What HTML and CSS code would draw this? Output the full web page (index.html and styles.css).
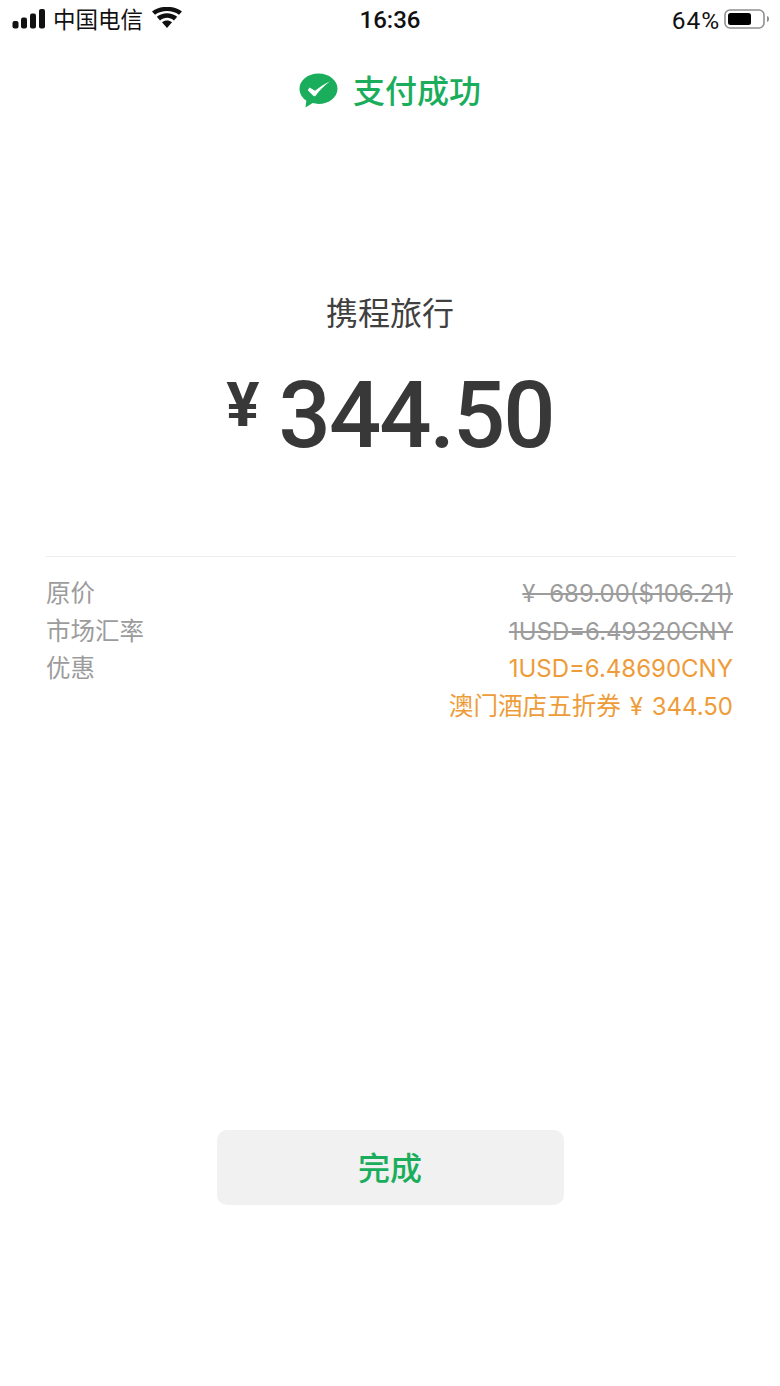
FILE: index.html
```html
<!DOCTYPE html>
<html lang="zh-CN">
<head>
<meta charset="utf-8">
<title>支付成功</title>
<link rel="stylesheet" href="styles.css">
</head>
<body>
<div class="page">
  <div class="status">
    <div class="status-left">
      <svg class="signal" width="34" height="20" viewBox="0 0 34 20"><rect x="0.5" y="12" width="6" height="7.5" rx="2"/><rect x="9" y="8.5" width="6" height="11" rx="2"/><rect x="18" y="4.5" width="6" height="15" rx="2"/><rect x="27" y="0" width="6" height="19.5" rx="2"/></svg>
      <span class="carrier">中国电信</span>
      <svg class="wifi" width="30" height="22" viewBox="0 0 30 22"><path d="M15 21 10 15.300C13 13 17 13 20 15.300Z"/><path d="M8 13.400 4.800 9.800C10.600 4.900 19.400 4.900 25.200 9.800L22 13.400C17.800 10 12.200 10 8 13.400Z"/><path d="M3 7.800 0 4.500C8.500-1.800 21.500-1.800 30 4.500L27 7.800C20.200 2.800 9.800 2.800 3 7.800Z"/></svg>
    </div>
    <div class="status-time">16:36</div>
    <div class="status-right">
      <span class="percent">64%</span>
      <svg class="battery" width="46" height="22" viewBox="0 0 46 22"><rect x="1" y="2" width="39" height="18" rx="5" fill="none" stroke="#8f8f8f" stroke-width="1.6"/><rect x="4" y="5" width="23" height="12" rx="2.500" fill="#000"/><path d="M43 8c1.600.4 2 1.600 2 3s-.4 2.600-2 3z" fill="#8f8f8f"/></svg>
    </div>
  </div>

  <div class="result">
    <svg class="logo" width="39" height="36" viewBox="0 0 39 36"><path d="M19.500 0.500C30 0.500 38.500 7.200 38.500 15.700S30 30.900 19.500 30.900c-2 0-4-.3-5.800-.8L6.500 34.500l.8-7C3 24.700.5 20.500.5 15.700.5 7.200 9 .5 19.500.5Z" fill="#1aae5c"/><path d="M8.800 17.200 10.500 14.500 16 17.700C20.500 14.200 25 11 30.800 8.500 25 12.500 20.500 17.500 16.800 22.500 15.800 23.700 14.800 23.500 14 22.600Z" fill="#fff"/></svg>
    <span class="result-text">支付成功</span>
  </div>

  <div class="merchant">携程旅行</div>
  <div class="amount"><span class="currency">¥</span><span class="value">344.50</span></div>

  <div class="details">
    <div class="detail-labels">
      <div>原价</div>
      <div>市场汇率</div>
      <div>优惠</div>
    </div>
    <div class="detail-values">
      <div class="struck">¥ 689.00($106.21)</div>
      <div class="struck">1USD=6.49320CNY</div>
      <div class="promo">1USD=6.48690CNY</div>
      <div class="promo"><span class="promo-name">澳门酒店五折券</span> ¥ 344.50</div>
    </div>
  </div>

  <div class="action"><button class="done" type="button">完成</button></div>
</div>
</body>
</html>
```
FILE: styles.css
```css
* { box-sizing: border-box; }
html, body { margin: 0; padding: 0; background: #fff; }
body { font-family: "Noto Sans CJK SC", "Liberation Sans", sans-serif; }
.page { width: 780px; height: 1386px; overflow: hidden; display: flex; flex-direction: column; }

.status { height: 40px; display: grid; grid-template-columns: 1fr auto 1fr; align-items: center; padding: 0 10px 0 12px; color: #111; }
.status-left { display: flex; align-items: center; }
.signal { fill: #111; margin-top: -3px; }
.carrier { font-size: 22.500px; line-height: 36px; margin: -4px 0 0 7px; }
.wifi { fill: #111; margin-left: 9px; margin-top: -4px; }
.status-time { font-family: "Roboto", sans-serif; font-size: 24px; font-weight: 500; margin-left: -2px; }
.status-right { display: flex; align-items: center; justify-content: flex-end; }
.percent { font-family: "Roboto", sans-serif; font-size: 24.500px; letter-spacing: .9px; }
.battery { margin-left: 4px; margin-top: -2px; }

.result { display: flex; justify-content: center; align-items: center; gap: 15px; margin-top: 33px; height: 36px; }
.logo { flex: none; }
.result-text { font-size: 32px; font-weight: 500; line-height: 36px; color: #1aae5c; margin-top: -4px; }

.merchant { margin-top: 178px; font-size: 32px; line-height: 48px; text-align: center; color: #404040; }

.amount { display: flex; justify-content: center; align-items: flex-start; margin-top: 27px; height: 117px; color: #383838; font-family: "Roboto", sans-serif; font-weight: 500; }
.currency { font-size: 62px; line-height: 62px; margin: 12px 19px 0 0; font-weight: 700; }
.value { font-size: 92px; line-height: 108px; letter-spacing: -2px; }

.details { margin: 77px 44px 0 46px; padding: 18px 3px 0 0; border-top: 1px solid #eeeeee; display: flex; justify-content: space-between; font-family: "Inter", "Noto Sans CJK SC", sans-serif; font-size: 24px; line-height: 37.700px; color: #9c9c9c; }
.detail-labels { font-size: 24.500px; }
.detail-values { text-align: right; }
.struck { text-decoration: line-through; word-spacing: 7px; }
.promo { color: #ee9c3a; word-spacing: 2px; }
.promo-name { font-size: 24.600px; }

.action { margin-top: auto; padding-bottom: 181px; display: flex; justify-content: center; }
.done { width: 347px; height: 75px; border: 0; border-radius: 10px; background: #f1f1f1; color: #1aae5c; font-family: inherit; font-size: 32px; font-weight: 500; padding: 0 0 4px; }
```
